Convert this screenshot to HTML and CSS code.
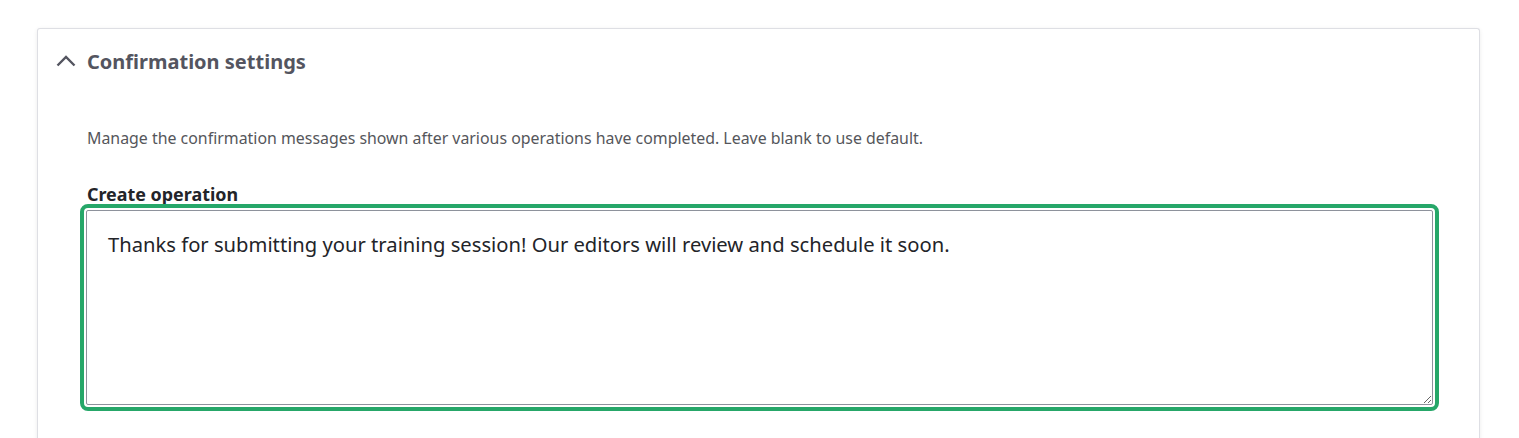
FILE: index.html
```html
<!DOCTYPE html>
<html lang="en">
<head>
  <meta charset="UTF-8">
  <meta name="viewport" content="width=device-width, initial-scale=1.0">
  <title>Confirmation settings</title>
  <link rel="stylesheet" href="styles.css">
</head>
<body>
  <div class="details">
    <div class="summary">
      <svg class="chevron" width="20" height="12" viewBox="0 0 20 12">
        <path d="M1.5 10.5 L10 2 L18.5 10.5" fill="none" stroke="#545560" stroke-width="2.4"/>
      </svg>
      <span class="summary-title">Confirmation settings</span>
    </div>

    <div class="details-body">
      <p class="description">Manage the confirmation messages shown after various operations have completed. Leave blank to use default.</p>

      <div class="form-item">
        <label class="form-label" for="create-op">Create operation</label>
        <div class="focus-ring">
          <textarea id="create-op" class="form-textarea">Thanks for submitting your training session! Our editors will review and schedule it soon.</textarea>
        </div>
      </div>
    </div>
  </div>
</body>
</html>
```

FILE: styles.css
```css
body {
  margin: 0;
  padding: 28px 39px 0 37px;
  background-color: #fff;
  font-family: "Noto Sans", "Open Sans", sans-serif;
  color: #232429;
}

/* Card */
.details {
  border: 1px solid #dedfe4;
  border-bottom: none;
  border-radius: 3px 3px 0 0;
  box-shadow: 0 1px 4px rgba(0, 0, 0, 0.08);
  background: #fff;
  height: 420px;
}

.summary {
  display: flex;
  align-items: center;
  height: 64px;
  padding-left: 18px;
}

.chevron {
  display: block;
  margin-right: 11px;
}

.summary-title {
  font-size: 20px;
  font-weight: 700;
  color: #545560;
}

.details-body {
  padding: 33px 41px 0 49px;
}

.description {
  margin: 0 0 32px;
  font-size: 15.9px;
  line-height: 24px;
  color: #55565b;
}

.form-label {
  display: block;
  font-size: 17.9px;
  font-weight: 700;
  line-height: 24px;
  margin-bottom: -2px;
}

/* Focus ring round the textarea */
.focus-ring {
  position: relative;
  margin-left: -7px;
  margin-right: -1px;
  border: 4px solid #26a769;
  border-radius: 8px;
  padding: 2px;
  background: #fff;
}

.form-textarea {
  display: block;
  box-sizing: border-box;
  width: 100%;
  height: 195px;
  margin: 0;
  padding: 19px 21px;
  border: 1px solid #8e929c;
  border-radius: 2px;
  font-family: "Noto Sans", "Open Sans", sans-serif;
  font-size: 20.2px;
  line-height: 28px;
  color: #232429;
  resize: vertical;
  outline: none;
}
```
